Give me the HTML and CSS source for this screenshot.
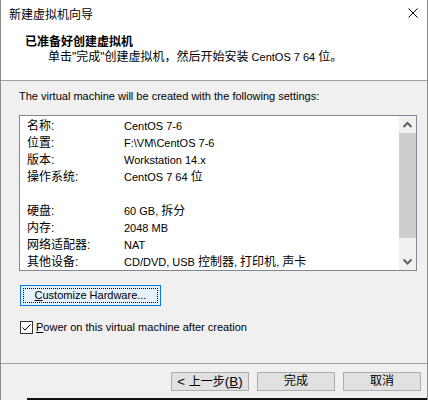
FILE: index.html
```html
<!DOCTYPE html>
<html lang="zh-CN">
<head>
  <meta charset="UTF-8">
  <meta name="viewport" content="width=device-width, initial-scale=1.0">
  <title>新建虚拟机向导</title>
  <link rel="stylesheet" href="styles.css">
</head>
<body>
  <div class="window">
    <div class="top">
      <div class="titlebar">
        <span class="title zh">新建虚拟机向导</span>
        <span class="close">
          <svg width="10" height="10" viewBox="0 0 10 10"><path d="M0.5 0.5 L9.5 9.5 M9.5 0.5 L0.5 9.5" stroke="#000" stroke-width="1" fill="none"/></svg>
        </span>
      </div>
      <div class="header">
        <h1 class="zh">已准备好创建虚拟机</h1>
        <p><span class="zh">单击"完成"创建虚拟机，然后开始安装</span> CentOS 7 64 <span class="zh">位。</span></p>
      </div>
    </div>

    <div class="content">
      <p class="intro">The virtual machine will be created with the following settings:</p>
      <div class="listbox">
        <ul class="rows">
          <li><span class="key zh">名称:</span><span>CentOS 7-6</span></li>
          <li><span class="key zh">位置:</span><span>F:\VM\CentOS 7-6</span></li>
          <li><span class="key zh">版本:</span><span>Workstation 14.x</span></li>
          <li><span class="key zh">操作系统:</span><span>CentOS 7 64 <span class="zh">位</span></span></li>
          <li></li>
          <li><span class="key zh">硬盘:</span><span>60 GB, <span class="zh">拆分</span></span></li>
          <li><span class="key zh">内存:</span><span>2048 MB</span></li>
          <li><span class="key zh">网络适配器:</span><span>NAT</span></li>
          <li><span class="key zh">其他设备:</span><span>CD/DVD, USB <span class="zh">控制器</span>, <span class="zh">打印机</span>, <span class="zh">声卡</span></span></li>
        </ul>
        <div class="scrollbar">
          <div class="sb-btn">
            <svg width="17" height="17" viewBox="0 0 17 17"><path d="M4.5 11 L8.5 7 L12.5 11" stroke="#606060" stroke-width="2" fill="none"/></svg>
          </div>
          <div class="sb-thumb"></div>
          <div class="sb-track"></div>
          <div class="sb-btn">
            <svg width="17" height="17" viewBox="0 0 17 17"><path d="M4.5 6.5 L8.5 10.5 L12.5 6.5" stroke="#606060" stroke-width="2" fill="none"/></svg>
          </div>
        </div>
      </div>

      <button class="customize"><span class="focus"><u>C</u>ustomize Hardware...</span></button>

      <label class="check">
        <span class="box">
          <svg width="13" height="13" viewBox="0 0 13 13"><rect x="0.5" y="0.5" width="12" height="12" fill="#fff" stroke="#333"/><path d="M2.5 6.5 L5 9 L10.5 3.5" stroke="#000" stroke-width="1" fill="none"/></svg>
        </span>
        <span><u>P</u>ower on this virtual machine after creation</span>
      </label>
    </div>

    <div class="footer">
      <button class="btn">&lt; <span class="zh">上一步</span>(<u>B</u>)</button>
      <button class="btn zh">完成</button>
      <button class="btn zh">取消</button>
    </div>
    <div class="edge"><span class="edge-gap"></span><span class="edge-dark"></span></div>
  </div>
</body>
</html>
```

FILE: styles.css
```css
body {
  margin: 0;
  font-family: "Liberation Sans", "Noto Sans CJK SC", sans-serif;
  font-size: 11px;
  color: #000;
}

/* 中文部分用 12px，英文 11px 更接近原窗口的宽度 */
.zh {
  font-size: 12px;
}

.window {
  width: 428px;
  height: 400px;
  box-sizing: border-box;
  border-left: 1px solid #8c8c8c;
  border-right: 1px solid #8c8c8c;
  background: #f0f0f0;
  display: flex;
  flex-direction: column;
}

.top {
  height: 81px;
  box-sizing: border-box;
  background: #fff;
  border-bottom: 1px solid #a0a0a0;
}

.titlebar {
  height: 26px;
  display: flex;
  align-items: center;
  justify-content: space-between;
  padding: 0 9px 0 8px;
}

.close {
  display: flex;
}

.header {
  padding: 8px 0 0 24px;
}

.header h1 {
  margin: 0;
  font-weight: 700;
  line-height: 16px;
}

.header p {
  margin: 0;
  padding-left: 23px;
  line-height: 14px;
}

.content {
  flex: 1;
  padding: 7px 10px 0 18px;
}

.intro {
  margin: 0;
  line-height: 16px;
}

.listbox {
  margin-top: 11px;
  height: 156px;
  box-sizing: border-box;
  border: 1px solid #828790;
  background: #fff;
  display: flex;
  overflow: hidden;
}

.rows {
  flex: 1;
  list-style: none;
  margin: 0;
  padding: 2px 0 0 7px;
}

.rows > li {
  height: 17px;
  line-height: 17px;
  display: flex;
  white-space: nowrap;
}

.rows .key {
  width: 97px;
}

.scrollbar {
  width: 17px;
  display: flex;
  flex-direction: column;
  background: #f0f0f0;
}

.sb-btn {
  height: 17px;
  display: flex;
}

.sb-thumb {
  height: 105px;
  background: #cdcdcd;
}

.sb-track {
  flex: 1;
}

.customize {
  display: block;
  margin: 14px 0 0 1px;
  width: 141px;
  height: 21px;
  padding: 2px;
  border: 1px solid #0078d7;
  background: #e5f1fb;
  font: inherit;
  color: #000;
}

.customize .focus {
  display: block;
  height: 100%;
  box-sizing: border-box;
  border: 1px dotted #000;
  line-height: 13px;
}

.check {
  display: flex;
  align-items: center;
  gap: 3px;
  margin: 15px 0 0 1px;
  line-height: 13px;
}

.check .box {
  display: flex;
}

.footer {
  height: 35px;
  box-sizing: border-box;
  border-top: 1px solid #a0a0a0;
  display: flex;
  justify-content: flex-end;
  gap: 8px;
  padding: 8px 6px 0 0;
}

.btn {
  width: 78px;
  height: 19px;
  padding: 0;
  border: 1px solid #adadad;
  background: #e1e1e1;
  font-family: inherit;
  color: #000;
  line-height: 15px;
}

.edge {
  height: 2px;
  display: flex;
}

.edge-gap {
  width: 26px;
}

.edge-dark {
  flex: 1;
  background: #111;
}
```
